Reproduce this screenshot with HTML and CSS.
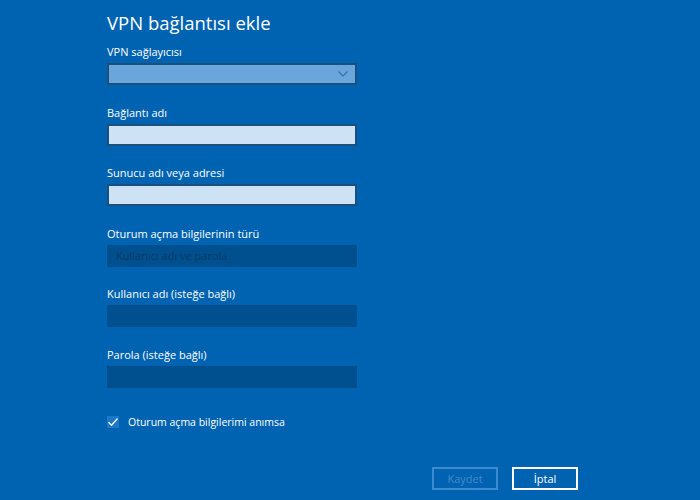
FILE: index.html
```html
<html>
  <head>
    <title>VPN bağlantısı ekle</title>
    <meta charset="utf-8">
    <link rel="stylesheet" href="styles.css">
  </head>
  <body>
    <div class="page">
      <h1>VPN bağlantısı ekle</h1>

      <div class="field">
        <label>VPN sağlayıcısı</label>
        <div class="box select">
          <svg class="chevron" width="10" height="6" viewBox="0 0 10 6"><path d="M0.5 0.5 L5 5 L9.5 0.5" fill="none" stroke="#3d6f9e" stroke-width="1.2"/></svg>
        </div>
      </div>

      <div class="field">
        <label>Bağlantı adı</label>
        <div class="box text"></div>
      </div>

      <div class="field">
        <label>Sunucu adı veya adresi</label>
        <div class="box text"></div>
      </div>

      <div class="field">
        <label>Oturum açma bilgilerinin türü</label>
        <div class="box disabled"><span class="placeholder">Kullanıcı adı ve parola</span></div>
      </div>

      <div class="field">
        <label>Kullanıcı adı (isteğe bağlı)</label>
        <div class="box disabled"></div>
      </div>

      <div class="field">
        <label>Parola (isteğe bağlı)</label>
        <div class="box disabled"></div>
      </div>

      <div class="check-row">
        <span class="checkbox">
          <svg width="12" height="12" viewBox="0 0 12 12"><path d="M1.5 6.2 L4.5 9.2 L10.5 2.5" fill="none" stroke="#fff" stroke-width="1.3"/></svg>
        </span>
        <span class="check-label">Oturum açma bilgilerimi anımsa</span>
      </div>
    </div>

    <div class="buttons">
      <button class="btn btn-disabled">Kaydet</button>
      <button class="btn">İptal</button>
    </div>
  </body>
</html>
```

FILE: styles.css
```css
body {
  margin: 0;
  width: 700px;
  height: 500px;
  background-color: #0063b1;
  font-family: "Open Sans", "Noto Sans", sans-serif;
  color: #fff;
  overflow: hidden;
}
.page {
  padding: 9px 0 0 107px;
}
h1 {
  margin: 0 0 7px 0;
  font-size: 18.5px;
  line-height: 28px;
  font-weight: 400;
}
.field {
  margin-bottom: 19.6px;
}
label {
  display: block;
  font-size: 11px;
  line-height: 16px;
  margin-bottom: 3px;
}
.box {
  width: 250px;
  height: 22px;
  box-sizing: border-box;
  position: relative;
}
.select {
  background-color: #6aa6dc;
  border: 2px solid #1b4f7c;
}
.chevron {
  position: absolute;
  right: 7px;
  top: 6px;
}
.text {
  background-color: #cde2f4;
  border: 2px solid #1b4f7c;
}
.disabled {
  background-color: #00508f;
}
.placeholder {
  display: block;
  padding-left: 9px;
  font-size: 11px;
  line-height: 22px;
  color: #0b3a66;
}
.check-row {
  display: flex;
  align-items: center;
  margin-top: 26px;
}
.checkbox {
  width: 12px;
  height: 12px;
  background-color: #1a78c8;
  display: flex;
}
.check-label {
  margin-left: 9px;
  font-size: 10.5px;
  line-height: 16px;
}
.buttons {
  display: flex;
  justify-content: flex-end;
  gap: 14px;
  padding-right: 122px;
  margin-top: 37px;
}
.btn {
  width: 66px;
  height: 23px;
  box-sizing: border-box;
  background: transparent;
  border: 2px solid #fff;
  color: #fff;
  font-family: "Open Sans", "Noto Sans", sans-serif;
  font-size: 11px;
  padding: 0;
}
.btn-disabled {
  border-color: #3d8bcf;
  color: #3d8bcf;
}
```
